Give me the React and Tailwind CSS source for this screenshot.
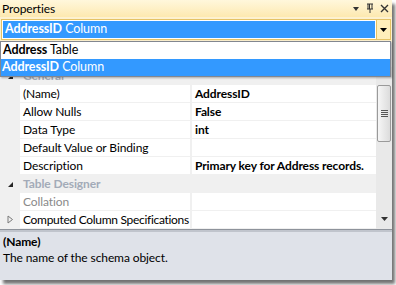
import React from "react";

const font = { fontFamily: 'Lato, "Noto Sans", sans-serif' };

function Row({ label, value, gray, expander, tight }) {
  return (
    <div className="flex h-[18px] border-b border-[#f0f0f0]">
      <div className="w-[20px] bg-[#f0f0f0] flex items-center justify-center text-[#555]">
        {expander && (
          <svg width="7" height="9" viewBox="0 0 7 9">
            <path d="M1 1 L5.5 4.5 L1 8 Z" fill="none" stroke="#7a7a7a" strokeWidth="1" />
          </svg>
        )}
      </div>
      <div className={`w-[170px] pl-[3px] flex items-center bg-white whitespace-nowrap ${tight ? "tracking-[-0.3px] pl-[2px]" : ""} ${gray ? "text-[#8a8a8a]" : "text-black"}`}>
        {label}
      </div>
      <div className="w-[2px] bg-[#f0f0f0]" />
      <div className="flex-1 pl-[3px] flex items-center bg-white font-bold text-black whitespace-nowrap">{value}</div>
    </div>
  );
}

function Category({ label }) {
  return (
    <div className="flex h-[18px] bg-[#f0f0f0] items-center">
      <div className="w-[20px] flex items-center justify-center">
        <svg width="7" height="7" viewBox="0 0 7 7">
          <path d="M6 1 L6 6 L1 6 Z" fill="#262626" />
        </svg>
      </div>
      <div className="pl-[3px] font-bold text-[#a3abb8] whitespace-nowrap">{label}</div>
    </div>
  );
}

export default function App() {
  return (
    <div className="w-[396px] h-[285px] bg-white relative text-[12px] leading-none tracking-[-0.1px]" style={font}>
      <div className="w-[392px] h-[280px] flex flex-col bg-[#f0f0f0] shadow-[3px_4px_3px_rgba(0,0,0,0.55)] relative">
        {/* Title bar */}
        <div className="h-[17px] flex items-center bg-gradient-to-b from-[#fff7dc] to-[#fde9b0] pl-[2px] pr-[3px]">
          <span className="text-black">Properties</span>
          <div className="ml-auto flex items-center gap-[6px]">
            <svg width="8" height="6" viewBox="0 0 8 6"><path d="M1 1 L7 1 L4 5 Z" fill="#333" /></svg>
            <svg width="8" height="11" viewBox="0 0 8 11">
              <path d="M1 1 H7 M2 1 V6 M6 1 V6 M1 6 H7 M4 6 V10" stroke="#333" strokeWidth="1" fill="none" />
              <rect x="3" y="1" width="1" height="5" fill="#333" />
            </svg>
            <svg width="9" height="9" viewBox="0 0 9 9"><path d="M1 1 L8 8 M8 1 L1 8" stroke="#333" strokeWidth="1.4" /></svg>
          </div>
        </div>
        {/* Combo area */}
        <div className="h-[25px] bg-[#fdf1d0] px-[1px] pt-[2px] pb-[2px]">
          <div className="h-[21px] flex border border-[#e5c365] bg-white">
            <div className="flex-1 m-[1px] bg-[#3399ff] text-white flex items-center pl-[2px] whitespace-nowrap text-[12.5px]">
              <span className="font-bold">AddressID</span>&nbsp;Column
            </div>
            <div className="w-[14px] bg-[#ffefbb] border-l border-[#e5c365] flex items-center justify-center">
              <svg width="7" height="4" viewBox="0 0 7 4"><path d="M0 0 L7 0 L3.5 4 Z" fill="#000" /></svg>
            </div>
          </div>
        </div>
        {/* Toolbar spacer */}
        <div className="h-[25px] bg-[#f0f0f0]" />
        {/* Grid */}
        <div className="flex h-[162px]">
          <div className="flex-1 flex flex-col bg-white">
            <Category label="General" />
            <Row label="(Name)" value="AddressID" />
            <Row label="Allow Nulls" value="False" />
            <Row label="Data Type" value="int" />
            <Row label="Default Value or Binding" value="" />
            <Row label="Description" value="Primary key for Address records." />
            <Category label="Table Designer" />
            <Row label="Collation" value="" gray />
            <Row label="Computed Column Specifications" value="" expander tight />
          </div>
          {/* Scrollbar */}
          <div className="w-[16px] bg-[#e9e9e9] relative flex flex-col items-center">
            <div className="mt-[18px] w-[14px] h-[57px] rounded-[2px] border border-[#9a9a9a] bg-gradient-to-r from-[#f6f6f6] to-[#dcdcdc] flex items-center justify-center">
              <svg width="7" height="7" viewBox="0 0 7 7">
                <path d="M0 0.5 H7 M0 2.5 H7 M0 4.5 H7 M0 6.5 H7" stroke="#555" strokeWidth="1" />
              </svg>
            </div>
            <div className="mt-auto mb-[8px]">
              <svg width="7" height="4" viewBox="0 0 7 4"><path d="M0 0 L7 0 L3.5 4 Z" fill="#333" /></svg>
            </div>
          </div>
        </div>
        {/* Splitter */}
        <div className="h-[3px] bg-[#c0c4cc] border-t border-[#8e939b]" />
        {/* Description */}
        <div className="flex-1 bg-[#dfe2e9] pl-[3px] pt-[4px]">
          <div className="font-bold text-black">(Name)</div>
          <div className="mt-[4px] text-black">The name of the schema object.</div>
        </div>

        {/* Dropdown list overlay */}
        <div className="absolute left-0 top-[41px] w-[391px] h-[36px] bg-white border border-[#828790] shadow-[1px_1px_2px_rgba(0,0,0,0.3)] flex flex-col text-[12.5px]">
          <div className="h-[17px] flex items-center pl-[2px] text-black whitespace-nowrap">
            <span className="font-bold">Address</span>&nbsp;Table
          </div>
          <div className="h-[17px] flex items-center pl-[1px] bg-[#3399ff] text-white whitespace-nowrap">
            <span className="font-bold">AddressID</span>&nbsp;Column
          </div>
        </div>
      </div>
    </div>
  );
}
